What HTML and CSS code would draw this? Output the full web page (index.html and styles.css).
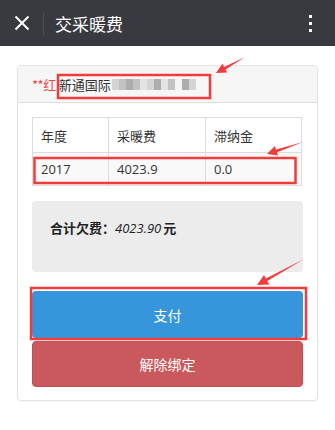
FILE: index.html
```html
<!DOCTYPE html>
<html lang="zh-CN">
<head>
    <meta charset="UTF-8">
    <meta name="viewport" content="width=device-width, initial-scale=1.0">
    <title>交采暖费</title>
    <link rel="stylesheet" href="styles.css">
</head>
<body>
    <!-- 顶部导航栏 -->
    <div class="topbar">
        <span class="close-btn">
            <svg width="16" height="16" viewBox="0 0 16 16">
                <path d="M1.5 1.5 L14.5 14.5 M14.5 1.5 L1.5 14.5" stroke="#fff" stroke-width="2" fill="none"/>
            </svg>
        </span>
        <span class="divider"></span>
        <span class="title">交采暖费</span>
        <span class="more">
            <i></i><i></i><i></i>
        </span>
    </div>

    <div class="page">
        <div class="panel">
            <div class="panel-heading">
                <span class="owner">**红</span>
                <span class="address">新通国际</span>
                <span class="mosaic">
                    <i class="m1"></i><i class="m2"></i><i class="m3"></i><i class="m2"></i><i class="m4"></i><i class="m1"></i><i class="m3"></i><i class="m4"></i><i class="m2"></i><i class="m0"></i><i class="m3"></i><i class="m1"></i>
                </span>
            </div>
            <div class="panel-body">
                <table class="fee-table">
                    <tr class="head-row">
                        <td class="c1">年度</td>
                        <td class="c2">采暖费</td>
                        <td class="c3">滞纳金</td>
                    </tr>
                    <tr class="data-row">
                        <td>2017</td>
                        <td>4023.9</td>
                        <td>0.0</td>
                    </tr>
                </table>

                <div class="total">
                    <b>合计欠费：</b><em>4023.90</em><b>元</b>
                </div>

                <button class="btn btn-pay">支付</button>
                <button class="btn btn-unbind">解除绑定</button>
            </div>
        </div>
    </div>

    <!-- 标注 -->
    <svg class="marks" width="335" height="430" viewBox="0 0 335 430">
        <g fill="none" stroke="#f23b3b" stroke-width="2.5">
            <rect x="58" y="75" width="152" height="23"/>
            <rect x="34.5" y="158" width="261" height="25"/>
            <rect x="31" y="288" width="275" height="51"/>
        </g>
        <g fill="#f23b3b">
            <polygon points="245,57 224.1,66.9 222.4,63.8 216,73 227.2,72.6 225.5,69.5"/>
            <polygon points="303,142 276,149.4 274.9,146.1 267,154 278.1,155.5 277,152.2"/>
            <polygon points="304,259 265.9,278.4 264,274.9 257,285 269.3,284.5 267.3,281"/>
        </g>
    </svg>
</body>
</html>
```

FILE: styles.css
```css
* {
    margin: 0;
    padding: 0;
    box-sizing: border-box;
}

body {
    font-family: 'Open Sans', 'Noto Sans CJK SC', sans-serif;
    background: #fff;
    color: #333;
    width: 335px;
    height: 430px;
    position: relative;
    overflow: hidden;
}

/* 顶部导航栏 */
.topbar {
    height: 46px;
    background: #393a3f;
    display: flex;
    align-items: center;
    color: #fff;
}

.close-btn {
    width: 43px;
    display: flex;
    justify-content: center;
}

.divider {
    width: 1px;
    height: 23px;
    background: #4f5055;
}

.title {
    margin-left: 11px;
    font-size: 17px;
    flex: 1;
}

.more {
    width: 50px;
    display: flex;
    flex-direction: column;
    align-items: center;
    gap: 4px;
}

.more i {
    width: 3px;
    height: 3px;
    background: #fff;
    display: block;
}

/* 内容 */
.page {
    padding: 19px 17px 0;
}

.panel {
    border: 1px solid #e2e2e2;
    border-radius: 4px;
    box-shadow: 0 1px 1px rgba(0,0,0,0.04);
}

.panel-heading {
    height: 37px;
    background: #f6f6f6;
    border-bottom: 1px solid #dedede;
    border-radius: 4px 4px 0 0;
    padding-left: 14px;
    display: flex;
    align-items: center;
    font-size: 13px;
    font-family: 'Noto Sans CJK SC', sans-serif;
}

.owner {
    color: #e04a4a;
    letter-spacing: -0.5px;
    margin-right: 3px;
}

.address {
    color: #333;
}

.mosaic {
    display: flex;
    height: 11px;
    margin-left: 1px;
}

.mosaic i {
    display: block;
    width: 7px;
    height: 11px;
}

.mosaic .m0 { background: #f4f4f4; }
.mosaic .m1 { background: #d4d4d4; }
.mosaic .m2 { background: #c2c2c2; }
.mosaic .m3 { background: #adadad; }
.mosaic .m4 { background: #e3e3e3; }

.panel-body {
    padding: 14px 14px 13px;
}

.fee-table {
    width: 270px;
    border-collapse: collapse;
    font-size: 13px;
}

.fee-table td {
    border: 1px solid #dcdcdc;
    padding: 0 8px;
}

.fee-table .c1 { width: 76px; }
.fee-table .c2 { width: 97px; }

.head-row td {
    height: 35px;
    font-family: 'Noto Sans CJK SC', sans-serif;
}

.data-row td {
    height: 33px;
    background: #f9f9f9;
}

.total {
    margin-top: 15px;
    height: 71px;
    background: #ececec;
    border-radius: 4px;
    padding: 17px 0 0 18px;
    display: flex;
    align-items: flex-start;
    font-size: 13px;
    line-height: 20px;
    color: #222;
}

.total b {
    font-family: 'Noto Sans CJK SC', sans-serif;
    font-weight: 700;
}

.total em {
    font-style: italic;
    margin-right: 2px;
}

.btn {
    display: block;
    width: 100%;
    border: none;
    border-radius: 4px;
    color: #fff;
    font-size: 14px;
    font-family: 'Noto Sans CJK SC', sans-serif;
    cursor: pointer;
}

.btn-pay {
    margin-top: 19px;
    height: 47px;
    background: #3796db;
}

.btn-unbind {
    margin-top: 3px;
    height: 46px;
    background: #c9595c;
    border: 1px solid #c04f52;
}

/* 标注层 */
.marks {
    position: absolute;
    left: 0;
    top: 0;
    pointer-events: none;
}
```
